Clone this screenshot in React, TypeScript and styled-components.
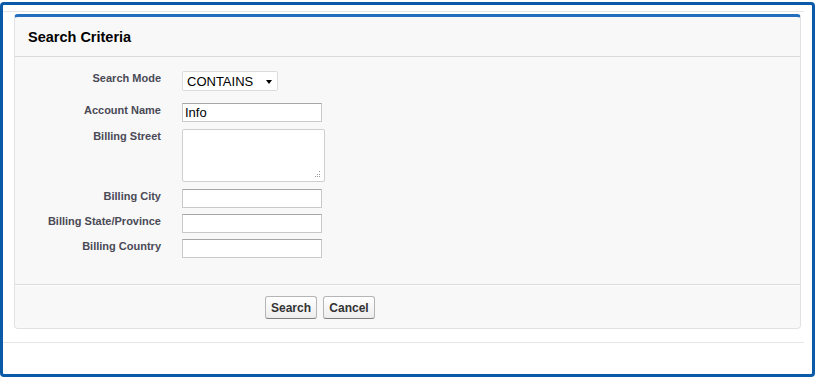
import styled, { createGlobalStyle } from 'styled-components'
import { ReactElement } from 'react'

const GlobalStyle = createGlobalStyle`
  body {
    margin: 0;
    background: #fff;
    font-family: "Liberation Sans", Arial, sans-serif;
  }
`

const Frame = styled.div`
  box-sizing: border-box;
  width: 815px;
  height: 375px;
  margin-top: 2px;
  border: 3px solid #0b5aa8;
  border-radius: 4px;
  padding-top: 6px;
`

const Section = styled.div`
  width: 801px;
  border-top: 1px solid #e6e6e6;
  border-bottom: 1px solid #e6e6e6;
  padding: 2px 3px 13px 11px;
  box-sizing: border-box;
`

const Panel = styled.div`
  background: #f8f8f8;
  border: 1px solid #e0e3e5;
  border-top: 3px solid #236fbd;
  border-radius: 4px;
`

const Header = styled.div`
  height: 39px;
  display: flex;
  align-items: center;
  padding-left: 13px;
  border-bottom: 1px solid #dbdbdb;
`

const Title = styled.h2`
  margin: 0;
  font-size: 14.5px;
  font-weight: bold;
  color: #000;
`

const Body = styled.div`
  padding: 14px 0 26px;
`

const Row = styled.div<{ $after: number }>`
  display: grid;
  grid-template-columns: 146px 1fr;
  column-gap: 21px;
  align-items: start;
  padding-bottom: ${(p) => p.$after}px;
`

const Label = styled.label`
  text-align: right;
  font-size: 11px;
  font-weight: bold;
  line-height: 14px;
  color: #4a4a56;
`

const SelectWrap = styled.div`
  position: relative;
  width: 96px;
`

const Select = styled.select`
  appearance: none;
  box-sizing: border-box;
  width: 96px;
  height: 20px;
  padding: 0 0 0 4px;
  border: 1px solid #dcdcdc;
  border-radius: 2px;
  background: #fff;
  font-family: "Liberation Sans", Arial, sans-serif;
  font-size: 13px;
  color: #000;
  outline: none;
`

const Caret = styled.span`
  position: absolute;
  left: 84px;
  top: 9px;
  width: 0;
  height: 0;
  border-left: 3.5px solid transparent;
  border-right: 3.5px solid transparent;
  border-top: 4px solid #000;
  pointer-events: none;
`

const TextInput = styled.input`
  box-sizing: border-box;
  width: 140px;
  height: 19px;
  padding: 0 2px;
  border: 1px solid #c9c9c9;
  border-top-color: #a6a6a6;
  background: #fff;
  font-family: "Liberation Sans", Arial, sans-serif;
  font-size: 13px;
  color: #000;
  outline: none;
`

const AreaWrap = styled.div`
  position: relative;
  width: 143px;
  height: 53px;
`

const TextArea = styled.textarea`
  box-sizing: border-box;
  width: 143px;
  height: 53px;
  border: 1px solid #cfcfcf;
  border-radius: 2px;
  background: #fff;
  resize: none;
  outline: none;
`

const Grip = styled.svg`
  position: absolute;
  right: 4px;
  bottom: 4px;
  pointer-events: none;
`

const Footer = styled.div`
  border-top: 1px solid #dbdbdb;
  box-shadow: inset 0 1px 0 #fff;
  padding: 11px 0 9px 250px;
  display: flex;
  gap: 6px;
`

const Button = styled.button`
  box-sizing: border-box;
  height: 23px;
  width: 52px;
  padding: 0;
  border: 1px solid #b5b5b5;
  border-bottom-color: #7f7f7f;
  border-radius: 3px;
  background: linear-gradient(#ffffff, #ededed);
  font-family: "Liberation Sans", Arial, sans-serif;
  font-size: 12px;
  font-weight: bold;
  color: #333;
`

const fields = [
  { label: 'Account Name', value: 'Info', after: 7 },
]

const App = (): ReactElement => {
  return (
    <>
      <GlobalStyle />
      <Frame>
        <Section>
          <Panel>
            <Header>
              <Title>Search Criteria</Title>
            </Header>
            <Body>
              <Row $after={12}>
                <Label>Search Mode</Label>
                <SelectWrap>
                  <Select defaultValue="CONTAINS">
                    <option>CONTAINS</option>
                    <option>STARTS WITH</option>
                    <option>EQUALS</option>
                  </Select>
                  <Caret />
                </SelectWrap>
              </Row>
              {fields.map((f) => (
                <Row key={f.label} $after={f.after}>
                  <Label>{f.label}</Label>
                  <TextInput defaultValue={f.value} />
                </Row>
              ))}
              <Row $after={7}>
                <Label>Billing Street</Label>
                <AreaWrap>
                  <TextArea />
                  <Grip width="7" height="7" viewBox="0 0 7 7">
                    <rect x="5" y="0" width="1" height="1" fill="#9a9a9a" />
                    <rect x="3" y="3" width="1" height="1" fill="#9a9a9a" />
                    <rect x="5" y="3" width="1" height="1" fill="#9a9a9a" />
                    <rect x="1" y="5" width="1" height="1" fill="#9a9a9a" />
                    <rect x="3" y="5" width="1" height="1" fill="#9a9a9a" />
                    <rect x="5" y="5" width="1" height="1" fill="#9a9a9a" />
                  </Grip>
                </AreaWrap>
              </Row>
              <Row $after={6}>
                <Label>Billing City</Label>
                <TextInput />
              </Row>
              <Row $after={6}>
                <Label>Billing State/Province</Label>
                <TextInput />
              </Row>
              <Row $after={0}>
                <Label>Billing Country</Label>
                <TextInput />
              </Row>
            </Body>
            <Footer>
              <Button type="submit">Search</Button>
              <Button type="button">Cancel</Button>
            </Footer>
          </Panel>
        </Section>
      </Frame>
    </>
  )
}

export default App
